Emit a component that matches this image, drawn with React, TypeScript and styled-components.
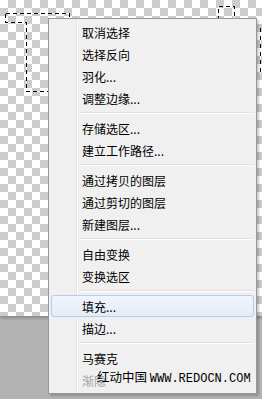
import styled, { createGlobalStyle } from 'styled-components'

const GlobalStyle = createGlobalStyle`
html, body {
    margin: 0;
    padding: 0;
    background: #b3b3b3;
}
`

type Entry = { label: string; active?: boolean; disabled?: boolean } | 'sep'

const entries: Entry[] = [
    { label: '取消选择' },
    { label: '选择反向' },
    { label: '羽化...' },
    { label: '调整边缘...' },
    'sep',
    { label: '存储选区...' },
    { label: '建立工作路径...' },
    'sep',
    { label: '通过拷贝的图层' },
    { label: '通过剪切的图层' },
    { label: '新建图层...' },
    'sep',
    { label: '自由变换' },
    { label: '变换选区' },
    'sep',
    { label: '填充...', active: true },
    { label: '描边...' },
    'sep',
    { label: '马赛克' },
    { label: '渐隐', disabled: true },
]

const Ants = () => (
    <AntsLayer width="262" height="316" viewBox="0 0 262 316">
        <g fill="none" strokeWidth="1" shapeRendering="crispEdges">
            <path d="M5.5 13.5H69.5V20M5.5 13.5V22.5H26.5V91.5H48" stroke="#fff" />
            <path d="M5.5 13.5H69.5V20M5.5 13.5V22.5H26.5V91.5H48" stroke="#000" strokeDasharray="4 3" />
            <path d="M218.5 20V6.5H234.5V20" stroke="#fff" />
            <path d="M218.5 20V6.5H234.5V20" stroke="#000" strokeDasharray="4 3" />
            <path d="M260.5 28V74" stroke="#fff" />
            <path d="M260.5 28V74" stroke="#000" strokeDasharray="4 4" />
        </g>
    </AntsLayer>
)

const App = () => {
    return (
        <Screen>
            <GlobalStyle />
            <Canvas />
            <Ants />
            <Menu>
                {entries.map((e, i) =>
                    e === 'sep' ? (
                        <Separator key={i} />
                    ) : (
                        <Item key={i} $active={e.active} $disabled={e.disabled}>
                            {e.label}
                        </Item>
                    )
                )}
            </Menu>
            <Watermark>
                红动中国 <Site>WWW.REDOCN.COM</Site>
            </Watermark>
        </Screen>
    )
}

export default App

const Screen = styled.div`
position: relative;
width: 262px;
height: 399px;
overflow: hidden;
background: #b3b3b3;
font-family: "Noto Sans CJK SC", "Noto Sans", sans-serif;
`

const Canvas = styled.div`
height: 316px;
background-color: #fff;
background-image:
    linear-gradient(45deg, #cccccc 25%, transparent 25%, transparent 75%, #cccccc 75%),
    linear-gradient(45deg, #cccccc 25%, transparent 25%, transparent 75%, #cccccc 75%);
background-size: 16px 16px;
background-position: 0 0, 8px 8px;
box-shadow: 0 2px 3px rgba(0, 0, 0, 0.25);
`

const AntsLayer = styled.svg`
position: absolute;
left: 0;
top: 0;
`

const Menu = styled.div`
position: absolute;
left: 48px;
top: 18px;
width: 203px;
padding: 2px;
border: 1px solid #979797;
background: linear-gradient(to right, #f0f0f0 27px, #e2e3e3 27px, #e2e3e3 28px, #ffffff 28px, #ffffff 29px, #f0f0f0 29px);
box-shadow: 2px 2px 2px rgba(0, 0, 0, 0.2);
display: flex;
flex-direction: column;
`

const Item = styled.div<{ $active?: boolean; $disabled?: boolean }>`
height: 22px;
box-sizing: border-box;
display: flex;
align-items: center;
padding-left: 30px;
font-size: 12px;
color: ${p => (p.$disabled ? '#a3a3a3' : '#000')};
border: 1px solid ${p => (p.$active ? '#b0cdf2' : 'transparent')};
border-radius: 3px;
background: ${p => (p.$active ? 'linear-gradient(#f1f5fc, #e3ecf9)' : 'transparent')};
`

const Separator = styled.div`
height: 8px;
margin-left: 29px;
display: flex;
flex-direction: column;
justify-content: center;

&::before {
    content: "";
    height: 1px;
    background: #e0e0e0;
}
&::after {
    content: "";
    height: 1px;
    background: #ffffff;
}
`

const Watermark = styled.div`
position: absolute;
left: 97px;
top: 369px;
font-size: 12.5px;
line-height: 16px;
color: #000;
white-space: nowrap;
`

const Site = styled.span`
font-family: "Liberation Mono", monospace;
font-size: 12px;
`
